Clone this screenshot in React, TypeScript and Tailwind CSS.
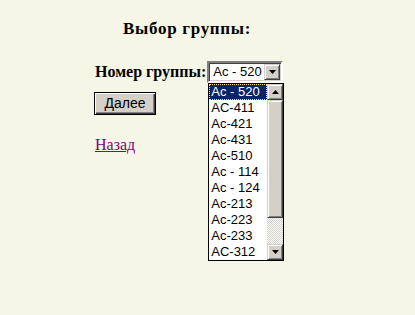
import React from 'react';

const groups = [
  'Ac - 520',
  'AC-411',
  'Ac-421',
  'Ac-431',
  'Ac-510',
  'Ac - 114',
  'Ac - 124',
  'Ac-213',
  'Ac-223',
  'Ac-233',
  'AC-312',
];

const Arrow = ({ up }: { up?: boolean }) => (
  <svg width="7" height="4" viewBox="0 0 7 4" className="block">
    {up ? <path d="M3.5 0 L7 4 L0 4 Z" fill="#000" /> : <path d="M0 0 L7 0 L3.5 4 Z" fill="#000" />}
  </svg>
);

// raised win98-like face
const raised =
  'bg-[#d4d0c8] border border-t-[#d4d0c8] border-l-[#d4d0c8] border-b-[#404040] border-r-[#404040] shadow-[inset_1px_1px_0_#fff,inset_-1px_-1px_0_#808080]';

export default function App() {
  return (
    <div className="min-h-[315px] w-[415px] bg-[#f5f6e6] pt-[19px] font-['Liberation_Serif',serif] text-black">
      <h2 className="ml-[123px] text-[17px] font-bold leading-[20px] tracking-[0.7px]">Выбор группы:</h2>

      <div className="mt-[22px] ml-[95px] flex items-center">
        <span className="text-[16px] font-bold leading-[20px]">Номер группы:</span>
        <div className="relative ml-[1px]">
          <div className="flex h-[22px] w-[76px] items-center border-2 border-t-[#808080] border-l-[#808080] border-b-white border-r-white bg-white shadow-[inset_1px_1px_0_#404040,inset_-1px_-1px_0_#d4d0c8]">
            <span className="flex-1 pl-[4px] font-['Liberation_Sans',sans-serif] text-[13px] leading-[16px]">Ac - 520</span>
            <div className={`mr-[1px] flex h-[16px] w-[16px] items-center justify-center ${raised}`}>
              <Arrow />
            </div>
          </div>

          <div className="absolute top-[22px] left-[1px] z-10 flex w-[76px] border border-black bg-white">
            <ul className="flex-1 font-['Liberation_Sans',sans-serif] text-[13px] leading-[16px]">
              {groups.map((g, i) => (
                <li
                  key={g}
                  className={
                    i === 0
                      ? 'h-[16px] border border-dotted border-[#f4e38a] bg-[#0a246a] pl-[1px] leading-[14px] text-white'
                      : 'h-[16px] pl-[2px]'
                  }
                >
                  {g}
                </li>
              ))}
            </ul>
            <div className="flex w-[16px] flex-col">
              <div className={`flex h-[16px] items-center justify-center ${raised}`}>
                <Arrow up />
              </div>
              <div className={`h-[118px] ${raised}`} />
              <div className="h-[26px] bg-[repeating-conic-gradient(#d4d0c8_0_25%,#ffffff_0_50%)] bg-[length:2px_2px]" />
              <div className={`flex h-[16px] items-center justify-center ${raised}`}>
                <Arrow />
              </div>
            </div>
          </div>
        </div>
      </div>

      <button className="mt-[9px] ml-[94px] flex h-[23px] w-[62px] items-center justify-center border border-black bg-[#d4d0c8] font-['Liberation_Sans',sans-serif] text-[14px] shadow-[inset_1px_1px_0_#fff,inset_-1px_-1px_0_#404040,inset_-2px_-2px_0_#808080]">
        Далее
      </button>

      <a href="#" className="mt-[21px] ml-[95px] inline-block text-[16px] leading-[18px] text-[#800080] underline">
        Назад
      </a>
    </div>
  );
}
